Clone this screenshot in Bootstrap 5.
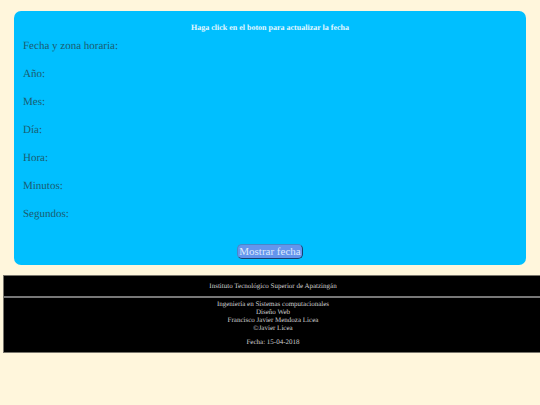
<!DOCTYPE html>
<html lang="es">
<head>
<meta charset="utf-8">
<meta name="viewport" content="width=device-width, initial-scale=1">
<title>Fecha</title>
<link href="https://cdn.jsdelivr.net/npm/bootstrap@5.3.0/dist/css/bootstrap.min.css" rel="stylesheet">
<style>
body { background: #fff6dc; font-family: "Liberation Serif", "Times New Roman", serif; overflow-x: hidden; text-rendering: geometricPrecision; }
.panel { background: #00bfff; border-radius: 7px; margin: 11px 14px 10px; padding: 11px 9px 6px; }
.panel-title { color: #e4f8ff; font-size: 8px; line-height: 12px; margin: 0 0 5px; }
.fields { color: #1b5c70; font-size: 11px; line-height: 14px; gap: 14px; margin-bottom: 23px; }
.btn-date { background: #6495ed; color: #dde8fb; font-size: 11px; line-height: 13px; padding: 0 1px; border: 1px solid; border-color: #4a86c8 #17406e #17406e #4a86c8; border-radius: 5px; }
.btn-date:hover { background: #5585dd; color: #fff; }
.site-footer { background: #000; color: #d0d0d0; font-size: 7px; line-height: 8px; margin-left: 3px; margin-right: -3px; border: 1px solid #77746b; }
.site-footer .institute { padding: 6px 0; border-bottom: 2px solid #777; }
.site-footer .credits { padding: 2px 0 6px; }
.site-footer .issued { padding-top: 6px; }
</style>
</head>
<body>
<main class="panel">
  <h1 class="panel-title text-center fw-bold">Haga click en el boton para actualizar la fecha</h1>
  <div class="fields d-flex flex-column">
    <div>Fecha y zona horaria: <output></output></div>
    <div>Año: <output></output></div>
    <div>Mes: <output></output></div>
    <div>Día: <output></output></div>
    <div>Hora: <output></output></div>
    <div>Minutos: <output></output></div>
    <div>Segundos: <output></output></div>
  </div>
  <div class="d-flex justify-content-center">
    <button type="button" class="btn btn-date">Mostrar fecha</button>
  </div>
</main>
<footer class="site-footer text-center">
  <div class="institute">Instituto Tecnológico Superior de Apatzingán</div>
  <div class="credits">
    <div>Ingeniería en Sistemas computacionales</div>
    <div>Diseño Web</div>
    <div>Francisco Javier Mendoza Licea</div>
    <div>©Javier Licea</div>
    <div class="issued">Fecha: 15-04-2018</div>
  </div>
</footer>
<script src="https://cdn.jsdelivr.net/npm/bootstrap@5.3.0/dist/js/bootstrap.bundle.min.js"></script>
</body>
</html>
